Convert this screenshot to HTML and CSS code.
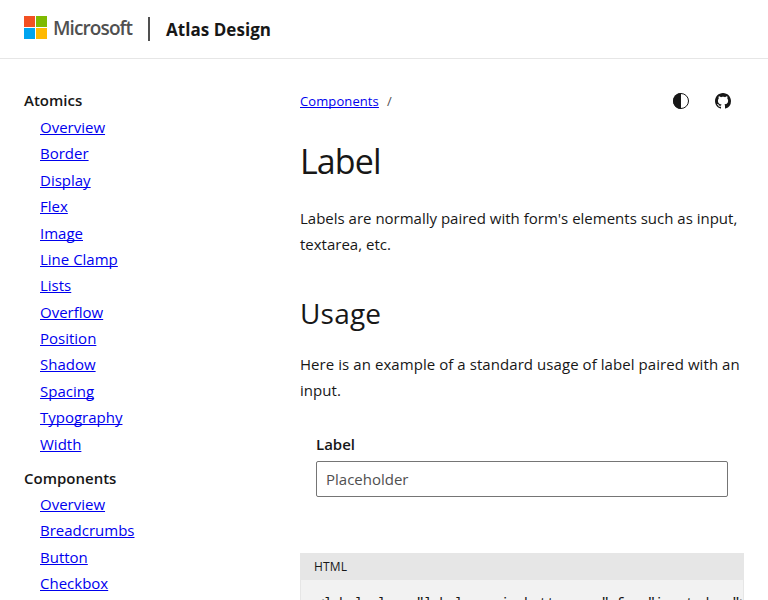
FILE: index.html
```html
<!DOCTYPE html>
<html lang="en">
<head>
<meta charset="utf-8">
<title>Label - Atlas Design</title>
<link rel="stylesheet" href="styles.css">
</head>
<body>
<header class="header">
  <svg class="logo" viewBox="0 0 23 23" width="23" height="23" aria-hidden="true">
    <path fill="#f25022" d="M0 0h11v11H0z"/><path fill="#7fba00" d="M12 0h11v11H12z"/>
    <path fill="#00a4ef" d="M0 12h11v11H0z"/><path fill="#ffb900" d="M12 12h11v11H12z"/>
  </svg>
  <span class="wordmark">Microsoft</span>
  <span class="divider"></span>
  <span class="site-name">Atlas Design</span>
</header>
<div class="layout">
  <nav class="sidebar">
    <h2 class="nav-title">Atomics</h2>
    <ul class="nav-list">
      <li><a href="#">Overview</a></li>
      <li><a href="#">Border</a></li>
      <li><a href="#">Display</a></li>
      <li><a href="#">Flex</a></li>
      <li><a href="#">Image</a></li>
      <li><a href="#">Line Clamp</a></li>
      <li><a href="#">Lists</a></li>
      <li><a href="#">Overflow</a></li>
      <li><a href="#">Position</a></li>
      <li><a href="#">Shadow</a></li>
      <li><a href="#">Spacing</a></li>
      <li><a href="#">Typography</a></li>
      <li><a href="#">Width</a></li>
    </ul>
    <h2 class="nav-title">Components</h2>
    <ul class="nav-list">
      <li><a href="#">Overview</a></li>
      <li><a href="#">Breadcrumbs</a></li>
      <li><a href="#">Button</a></li>
      <li><a href="#">Checkbox</a></li>
    </ul>
  </nav>
  <main class="content">
    <div class="toolbar">
      <div class="breadcrumbs"><a href="#">Components</a><span class="slash">/</span></div>
      <div class="actions">
        <svg viewBox="0 0 16 16" width="16" height="16"><circle cx="8" cy="8" r="7.5" fill="none" stroke="#171717"/><path fill="#171717" d="M8 0a8 8 0 0 0 0 16z"/></svg>
        <svg viewBox="0 0 16 16" width="16" height="16"><path fill="#171717" d="M8 0C3.58 0 0 3.58 0 8c0 3.54 2.29 6.53 5.47 7.59.4.07.55-.17.55-.38 0-.19-.01-.82-.01-1.49-2.01.37-2.53-.49-2.69-.94-.09-.23-.48-.94-.82-1.13-.28-.15-.68-.52-.01-.53.63-.01 1.08.58 1.23.82.72 1.21 1.87.87 2.33.66.07-.52.28-.87.51-1.07-1.78-.2-3.64-.89-3.64-3.95 0-.87.31-1.59.82-2.15-.08-.2-.36-1.02.08-2.12 0 0 .67-.21 2.2.82.64-.18 1.32-.27 2-.27s1.36.09 2 .27c1.53-1.04 2.2-.82 2.2-.82.44 1.1.16 1.92.08 2.12.51.56.82 1.27.82 2.15 0 3.07-1.87 3.75-3.65 3.95.29.25.54.73.54 1.48 0 1.07-.01 1.93-.01 2.2 0 .21.15.46.55.38A8.01 8.01 0 0 0 16 8c0-4.42-3.58-8-8-8z"/></svg>
      </div>
    </div>
    <h1 class="title">Label</h1>
    <p class="text intro">Labels are normally paired with form's elements such as input,<br>textarea, etc.</p>
    <h2 class="subtitle">Usage</h2>
    <p class="text usage">Here is an example of a standard usage of label paired with an<br>input.</p>
    <div class="example">
      <label class="label" for="input-demo">Label</label>
      <input class="input" id="input-demo" type="text" placeholder="Placeholder">
    </div>
    <div class="code">
      <div class="code-header">HTML</div>
      <pre class="code-body">&lt;label class="label margin-bottom-xxs" for="input-demo"&gt;Label&lt;/label&gt;</pre>
    </div>
  </main>
</div>
</body>
</html>
```
FILE: styles.css
```css
* { box-sizing: border-box; }
html, body { height: 100%; overflow: hidden; }
body {
  margin: 0;
  display: flex;
  flex-direction: column;
  background: #fff;
  color: #171717;
  font: 15px/26px "Open Sans", "Noto Sans", sans-serif;
}
a { color: #0000ee; text-underline-offset: 1px; text-decoration-thickness: 1px; text-decoration-skip-ink: none; }
h1, h2, p, ul { margin: 0; padding: 0; font-weight: 400; }
.header {
  flex: none;
  height: 59px;
  padding: 0 24px;
  display: flex;
  align-items: center;
  border-bottom: 1px solid #e6e6e6;
}
.logo { margin-bottom: 3px; }
.wordmark {
  width: 79px;
  margin: 0 0 2px 6px;
  color: #505050;
  font-size: 19px;
  font-weight: 600;
  letter-spacing: -0.9px;
}
.divider { width: 2px; height: 24px; margin: 0 16px; background: #505050; }
.site-name { margin-top: 2px; font-size: 17px; font-weight: 700; letter-spacing: 0.05px; }
.layout { flex: 1; display: flex; min-height: 0; overflow: hidden; }
.sidebar { width: 300px; flex: none; padding: 28px 24px 0; }
.nav-title { font-size: 15px; line-height: 27px; font-weight: 600; }
.nav-list { list-style: none; padding-left: 16px; }
.nav-list + .nav-title { margin-top: 8px; line-height: 26px; }
.nav-list li { height: 26.38px; line-height: 26.38px; }
.content { width: 444px; padding-top: 29px; }
.toolbar { display: flex; justify-content: space-between; align-items: center; height: 26px; }
.breadcrumbs { font-size: 13px; letter-spacing: 0.1px; }
.slash { margin-left: 8px; color: #505050; }
.actions { display: flex; gap: 26px; padding-right: 13px; }
.title { margin-top: 24px; font-size: 34px; line-height: 46px; letter-spacing: -0.9px; }
.intro { margin-top: 21px; }
.subtitle { margin-top: 36px; font-size: 28px; line-height: 40px; letter-spacing: 0.2px; }
.text { white-space: nowrap; }
.usage { margin-top: 18px; letter-spacing: 0.065px; }
.example { padding: 28px 16px 0; }
.label { display: block; font-weight: 600; font-size: 15px; line-height: 26px; }
.input {
  display: block;
  width: 412px;
  height: 36px;
  margin-top: 4px;
  padding: 0 9px;
  border: 1px solid #757575;
  border-radius: 2px;
  background: #fff;
  font: inherit;
}
.input::placeholder { color: #505050; opacity: 1; }
.code { margin-top: 56px; border: 1px solid #e6e6e6; border-width: 0 1px; background: #f2f2f2; height: 47px; overflow: hidden; }
.code-header { height: 27px; padding-left: 13px; background: #e6e6e6; font-size: 12px; line-height: 27px; letter-spacing: 0.15px; }
.code-body { margin: 0; padding: 14px 0 0 15px; font: 14px/20px "Liberation Mono", monospace; letter-spacing: -0.7px; }
```
